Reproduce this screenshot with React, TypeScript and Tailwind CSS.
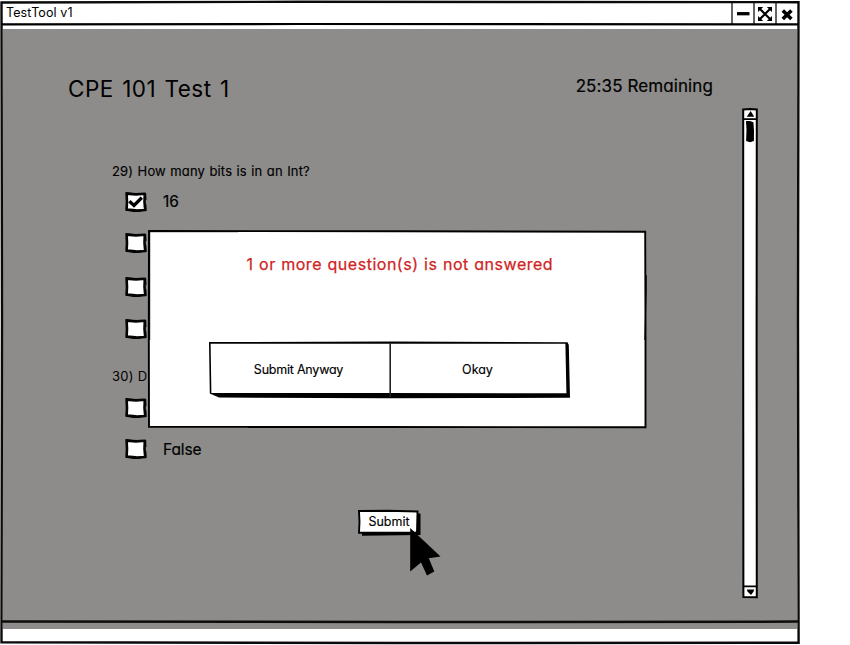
import React from "react";

function Frame({ w, h, children }: { w: number; h: number; children: React.ReactNode }) {
  return (
    <svg className="pointer-events-none absolute left-0 top-0 overflow-visible" width={w} height={h} viewBox={`0 0 ${w} ${h}`}>
      {children}
    </svg>
  );
}

function Checkbox({ checked }: { checked?: boolean }) {
  return (
    <svg width="24" height="22" viewBox="0 0 24 22" className="shrink-0">
      <path d="M2.6 2.6 L12 3.4 L20.8 2.8 L20.5 11 L21.2 19 L13 19.6 L9 19 L2.6 18.6 L3 11 Z" fill="#fff" stroke="#050505" strokeWidth="2.6" strokeLinejoin="round" />
      <path d="M1.6 1.6 L11 2.8 M21.6 2 L22 9 M21.8 13 L22 20 M1.6 19 L10 20.6 L17 20" fill="none" stroke="#000" strokeWidth="1" />
      {checked && <path d="M5.4 10.3 L10 14.4 L17.8 6.6" fill="none" stroke="#000" strokeWidth="3.4" />}
    </svg>
  );
}

function Option({ label, checked, className }: { label?: string; checked?: boolean; className: string }) {
  return (
    <div className={`flex items-center pl-[121px] ${className}`}>
      <Checkbox checked={checked} />
      <span className="ml-[15px] mt-px text-[15.5px] tracking-[-0.1px] [-webkit-text-stroke:0.2px_#000]">{label}</span>
    </div>
  );
}

function TitleBar() {
  return (
    <header className="flex h-[26px] shrink-0 items-center justify-between bg-white pl-[6px] pr-[3px]">
      <span className="text-[12.5px] tracking-[0.12px]">TestTool v1</span>
      <div className="flex h-full">
        <svg width="66" height="26" viewBox="731 0 66 26">
          <path d="M732 3V24 M754 3V24 M776 3V24" stroke="#333" strokeWidth="1.5" />
          <path d="M737 13.7H749.5" stroke="#000" strokeWidth="3.3" />
          <path d="M760 9L770 19 M770 9L760 19" stroke="#000" strokeWidth="2.2" />
          <path d="M758 7h5.2l-5.2 5z M766.8 7h5.2v5z M758 16v5h5.2z M772 16v5h-5.2z" fill="#000" />
          <path d="M782.8 10.4L791.4 19 M791.4 10.4L782.8 19" stroke="#000" strokeWidth="3.6" />
        </svg>
      </div>
    </header>
  );
}

function ScrollBar() {
  return (
    <svg width="17" height="491" viewBox="742 108 17 491" className="shrink-0">
      <path d="M743.2 109.5L750 109L756.8 109.5L756.6 350L756.8 597.3L743.4 597L743.2 350Z" fill="#fff" stroke="#000" strokeWidth="2" />
      <path d="M743 119.2H757 M743 586.4H757" stroke="#000" strokeWidth="1.7" />
      <path d="M750.7 111L754.2 116.8H746.7Z M746.8 589.4H754.2L753.6 591.5L751 595L747.5 591.5Z" fill="#000" />
      <path d="M746 121L750 121L753.4 122.2L754 131L753.9 141L750 142.2L746.1 141L746.5 130Z" fill="#000" />
    </svg>
  );
}

function Dialog() {
  return (
    <section className="absolute left-[148px] top-[230px] flex h-[199px] w-[499px] flex-col items-center">
      <Frame w={499} h={199}>
        <path d="M1 1L250 1.2L497.2 1.8L497.5 100L497.5 197.3L230 197L1 196.8L.8 100Z" fill="#fff" stroke="#000" strokeWidth="1.9" />
        <path d="M1.7 1V110 M1 1.7H90 M496.8 110L498.2 60V45 M100 197.5H340" stroke="#000" strokeWidth="1" fill="none" />
      </Frame>
      <p className="relative ml-[98.5px] mt-[22px] h-6 self-start whitespace-nowrap text-[16px] leading-6 tracking-[0.52px] text-[#cf2424] [-webkit-text-stroke:0.25px_#cf2424] [word-spacing:0.5px]">
        1 or more question(s) is not answered
      </p>
      <div className="relative ml-[61px] mt-[66px] flex h-[56px] w-[361px] self-start text-[12.5px]">
        <Frame w={361} h={56}>
          <path d="M0 0L180 -.4L358.5 .2L359.8 3L361 55.7L270 56L180 56.2L10 55.6L.8 51.5Z" fill="#000" />
          <path d="M1.6 1.8L180 1.8L356.4 1.8L357.4 51.2L180 51L2.4 51Z" fill="#fff" />
          <path d="M181.2 1V55" stroke="#222" strokeWidth="1.6" />
        </Frame>
        <button className="relative h-[57px] w-[179px] tracking-[-0.22px] [-webkit-text-stroke:0.15px_#000]">Submit Anyway</button>
        <button className="relative h-[57px] w-[179px] [-webkit-text-stroke:0.15px_#000]">Okay</button>
      </div>
    </section>
  );
}

export default function App() {
  return (
    <div className="h-[645px] w-[850px] overflow-hidden bg-white font-['Inter','Liberation_Sans',sans-serif] text-black [font-feature-settings:'cv11']">
      <div className="relative flex h-[645px] w-[800px] flex-col">
        <TitleBar />
        <div className="h-[3px] shrink-0 bg-white" />
        <main className="mx-[3px] flex h-[600px] shrink-0 justify-between bg-[#8d8c8a]">
          <div className="flex w-[720px] flex-col">
            <div className="mt-[40px] flex h-10 items-center justify-between pl-[65px] pr-[10px]">
              <h1 className="text-[22.5px] tracking-[0.5px] [word-spacing:1.5px]">CPE 101 Test 1</h1>
              <span className="mb-[4px] text-[17px] tracking-[0.1px] [-webkit-text-stroke:0.2px_#000]">25:35 Remaining</span>
            </div>
            <p className="mt-[52px] h-5 pl-[109px] text-[13px] leading-5 tracking-[0.15px] [-webkit-text-stroke:0.15px_#000] [word-spacing:0.6px]">29) How many bits is in an Int?</p>
            <Option className="h-[41px]" label="16" checked />
            <Option className="h-[42px]" />
            <Option className="h-[46px]" />
            <Option className="h-[38px]" />
            <p className="mt-[18px] h-5 pl-[109px] text-[13px] leading-5 tracking-[0.3px]">30) D</p>
            <Option className="h-[44px]" />
            <Option className="h-[38px]" label="False" />
            <button className="relative ml-[355px] mt-[42px] h-[26px] w-[63px] text-[12.5px] [-webkit-text-stroke:0.15px_#000]">
              <Frame w={63} h={26}>
                <path d="M4 4L62.5 3.5V25L4 25.8Z" fill="#000" />
                <path d="M1 1L30 .8L59.5 1.5L59 22.5L1 22.8L1.5 12Z" fill="#fff" stroke="#000" strokeWidth="1.9" />
              </Frame>
              <span className="relative -left-[0.5px] -top-px">Submit</span>
            </button>
          </div>
          <div className="mr-[38px] mt-[79px]">
            <ScrollBar />
          </div>
        </main>
        <Frame w={800} h={645}>
          <path d="M1.5 2.5L300 1.8L798.5 2.2L798 320L798.6 642.8L400 643L1.5 642.3L2 320Z" fill="none" stroke="#0a0a0a" strokeWidth="2.4" />
          <path d="M2 24.3L300 24L798 24.4" fill="none" stroke="#000" strokeWidth="2.2" />
          <path d="M2 621.5L400 622L798 621.6" fill="none" stroke="#0c0c0a" strokeWidth="2.5" />
        </Frame>
        <Dialog />
        <svg className="absolute left-[409px] top-[526px]" width="34" height="52" viewBox="409 526 34 52">
          <path d="M410.2 528L440.5 556.5L428.8 558.2L434.3 571.5L427 575.5L421 562.5L410.2 571.5Z" fill="#000" />
        </svg>
      </div>
    </div>
  );
}
